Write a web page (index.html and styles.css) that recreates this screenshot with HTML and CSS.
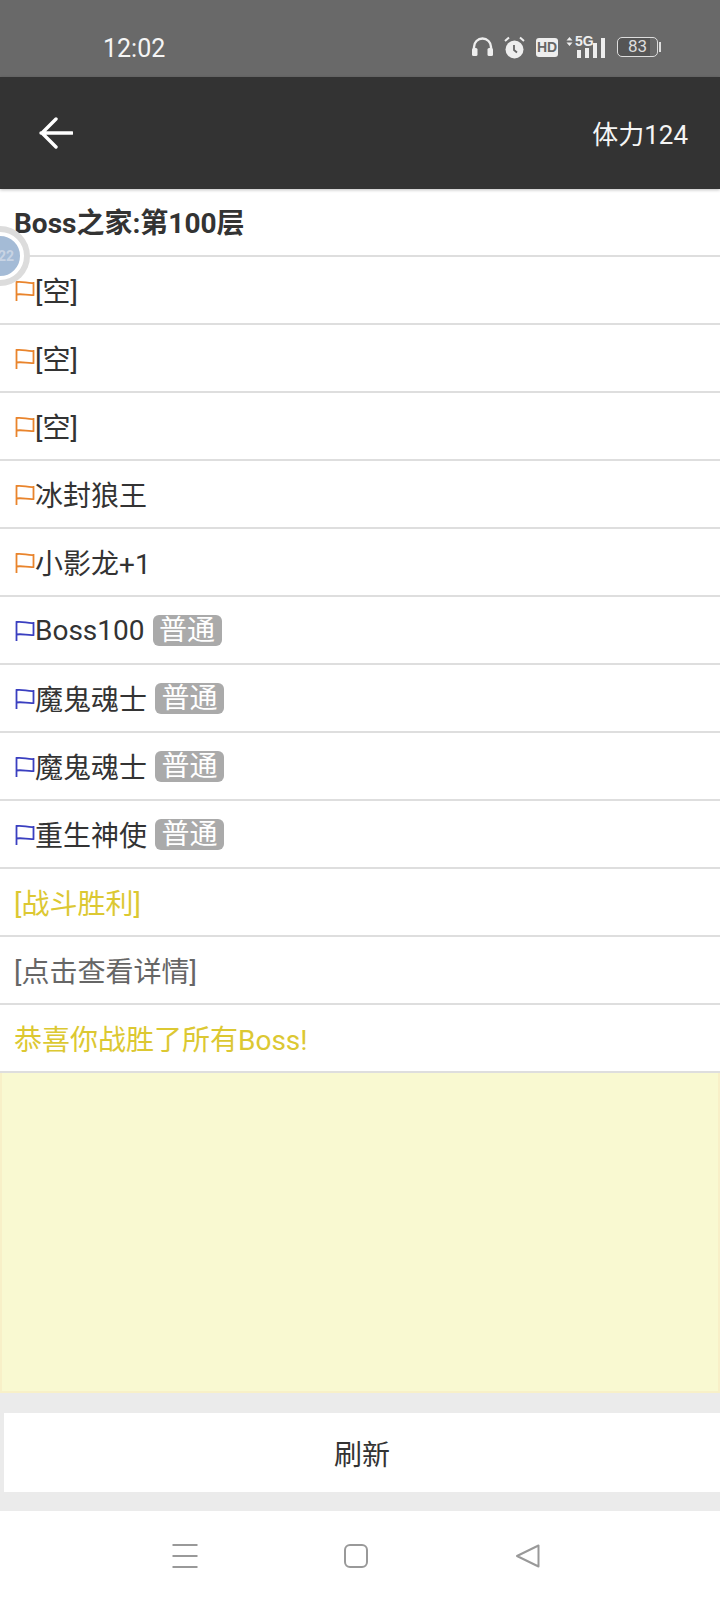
FILE: index.html
```html
<!DOCTYPE html>
<html lang="zh">
<head>
<meta charset="utf-8">
<title>Boss之家</title>
<link rel="stylesheet" href="styles.css">
</head>
<body>
<div class="page">
  <div class="status">
    <span class="time">12:02</span>
    <div class="status-icons">
      <svg class="ic-head" width="21" height="20" viewBox="0 0 21 20"><path d="M2 14V10a8.500 8.500 0 0 1 17 0v4" fill="none" stroke="#eee" stroke-width="2.400"/><rect x="0" y="11" width="5.500" height="8" rx="1.500" fill="#eee"/><rect x="15.500" y="11" width="5.500" height="8" rx="1.500" fill="#eee"/></svg>
      <svg class="ic-alarm" width="21" height="23" viewBox="0 0 21 23"><circle cx="10.500" cy="13.500" r="9" fill="#eee"/><path d="M10 9v5l3 2.500" fill="none" stroke="#666" stroke-width="1.800"/><path d="M1 5l4-3.500M20 5l-4-3.500" stroke="#eee" stroke-width="2" fill="none"/></svg>
      <span class="hd">HD</span>
      <div class="net">
        <svg class="net-arrows" width="7" height="9" viewBox="0 0 7 9"><path d="M3.500 0l3 3.500h-6zM3.500 9l3-3.500h-6z" fill="#eee"/></svg>
        <span class="five-g">5G</span>
        <div class="bars"><i class="b1"></i><i class="b2"></i><i class="b3"></i><i class="b4"></i></div>
      </div>
      <div class="battery"><span class="batt-body">83</span><span class="batt-tip"></span></div>
    </div>
  </div>
  <header class="appbar">
    <svg class="back" width="34" height="32" viewBox="0 0 34 32"><path d="M2 16h31M17 2 3 16l14 14" fill="none" stroke="#fff" stroke-width="3.400" stroke-linecap="round" stroke-linejoin="round"/></svg>
    <span class="stamina">体力124</span>
  </header>
  <main class="list">
    <div class="row title">Boss之家:第100层</div>
    <div class="row"><svg class="flag orange" viewBox="0 0 20 21"><path d="M1.500 21V2c6-1 11 1.500 17 1v12c-6 .5-11-1.500-17-.5"/></svg>[空]</div>
    <div class="row"><svg class="flag orange" viewBox="0 0 20 21"><path d="M1.500 21V2c6-1 11 1.500 17 1v12c-6 .5-11-1.500-17-.5"/></svg>[空]</div>
    <div class="row"><svg class="flag orange" viewBox="0 0 20 21"><path d="M1.500 21V2c6-1 11 1.500 17 1v12c-6 .5-11-1.500-17-.5"/></svg>[空]</div>
    <div class="row"><svg class="flag orange" viewBox="0 0 20 21"><path d="M1.500 21V2c6-1 11 1.500 17 1v12c-6 .5-11-1.500-17-.5"/></svg>冰封狼王</div>
    <div class="row"><svg class="flag orange" viewBox="0 0 20 21"><path d="M1.500 21V2c6-1 11 1.500 17 1v12c-6 .5-11-1.500-17-.5"/></svg>小影龙+1</div>
    <div class="row"><svg class="flag blue" viewBox="0 0 20 21"><path d="M1.500 21V2c6-1 11 1.500 17 1v12c-6 .5-11-1.500-17-.5"/></svg>Boss100<span class="tag">普通</span></div>
    <div class="row"><svg class="flag blue" viewBox="0 0 20 21"><path d="M1.500 21V2c6-1 11 1.500 17 1v12c-6 .5-11-1.500-17-.5"/></svg>魔鬼魂士<span class="tag">普通</span></div>
    <div class="row"><svg class="flag blue" viewBox="0 0 20 21"><path d="M1.500 21V2c6-1 11 1.500 17 1v12c-6 .5-11-1.500-17-.5"/></svg>魔鬼魂士<span class="tag">普通</span></div>
    <div class="row"><svg class="flag blue" viewBox="0 0 20 21"><path d="M1.500 21V2c6-1 11 1.500 17 1v12c-6 .5-11-1.500-17-.5"/></svg>重生神使<span class="tag">普通</span></div>
    <div class="row gold">[战斗胜利]</div>
    <div class="row grey">[点击查看详情]</div>
    <div class="row gold">恭喜你战胜了所有Boss!</div>
  </main>
  <div class="notice"></div>
  <div class="actions"><button class="refresh" type="button">刷新</button></div>
  <nav class="navbar">
    <svg width="26" height="26" viewBox="0 0 26 26"><path d="M0.500 2h25M0.500 13h25M0.500 24h25" stroke="#999" stroke-width="2.200" fill="none"/></svg>
    <svg width="26" height="26" viewBox="0 0 26 26"><rect x="2" y="2" width="22" height="22" rx="5" fill="none" stroke="#999" stroke-width="2"/></svg>
    <svg class="nav-back" width="26" height="26" viewBox="0 0 26 26"><path d="M23.500 2.500v21L2 13z" fill="none" stroke="#999" stroke-width="2" stroke-linejoin="round"/></svg>
  </nav>
  <div class="float-ball"><span class="ball-text">22</span></div>
</div>
</body>
</html>
```
FILE: styles.css
```css
* { box-sizing: border-box; }
html, body { margin: 0; padding: 0; }
body { width: 720px; height: 1600px; overflow: hidden; background: #ebebeb; font-family: Roboto, "Noto Sans CJK SC", sans-serif; color: #333; }
.page { position: relative; width: 720px; height: 1600px; display: flex; flex-direction: column; }

.status { height: 77px; flex: none; background: #696969; display: flex; align-items: center; padding: 19px 59px 0 103px; justify-content: space-between; }
.time { color: #f5f5f5; font-size: 25px; }
.status-icons { display: flex; align-items: center; margin-bottom: 2px; }
.ic-head { margin-right: 11px; }
.ic-alarm { margin-right: 11px; }
.hd { width: 22px; height: 19px; background: #eee; color: #666; border-radius: 3px; font: 700 14px/19px "Liberation Sans Narrow", "Liberation Sans", sans-serif; text-align: center; margin-right: 8px; }
.net { position: relative; width: 39px; height: 22px; margin-right: 12px; }
.net-arrows { position: absolute; left: 0; top: 1px; }
.five-g { position: absolute; left: 9px; top: -2px; color: #eee; font: 700 14px/14px "Liberation Sans Narrow", "Liberation Sans", sans-serif; }
.bars { position: absolute; left: 11px; bottom: 0; width: 28px; height: 20px; display: flex; align-items: flex-end; justify-content: space-between; }
.bars i { display: block; width: 4px; background: #eee; }
.b1 { height: 8px; } .b2 { height: 10px; } .b3 { height: 15px; } .b4 { height: 20px; }
.battery { display: flex; align-items: center; }
.batt-body { width: 41px; height: 20px; border: 1.500px solid #ddd; border-radius: 5px; background: linear-gradient(90deg, #555 0 83%, transparent 83%); color: #ddd; font-size: 17px; line-height: 17px; text-align: center; }
.batt-tip { width: 2px; height: 10px; background: #ddd; margin-left: 1px; }

.appbar { height: 112px; flex: none; background: #333; display: flex; align-items: center; justify-content: space-between; padding: 0 32px 0 39px; box-shadow: 0 1px 3px rgba(0,0,0,.25); position: relative; }
.stamina { color: #f5f5f5; font-size: 26px; margin-bottom: 2px; }

.list { background: #fff; flex: none; }
.row { height: 68px; padding: 0 14px; display: flex; align-items: center; border-bottom: 2px solid #dedede; font-size: 28px; color: #333; white-space: pre; }
.row.title { font-weight: 700; padding-bottom: 2px; }
.row.gold { color: #dcc832; }
.row.grey { color: #666; }
.flag { width: 20px; height: 21px; margin-left: 1px; fill: none; stroke-width: 1.800; flex: none; }
.orange { stroke: #e9842c; }
.blue { stroke: #3a3fc0; }
.tag { margin-left: 8px; background: #aaa; color: #fff; border-radius: 6px; height: 31px; width: 69px; font-size: 28px; line-height: 31px; text-align: center; }

.notice { height: 320px; flex: none; background: #f9f9d1; border: 2px solid #f8f0c8; border-top: 0; }
.actions { flex: 1; padding: 20px 0 19px 4px; display: flex; }
.refresh { flex: 1; border: 0; background: #fff; color: #333; font: 28px Roboto, "Noto Sans CJK SC", sans-serif; }
.navbar { height: 89px; flex: none; background: #fff; display: flex; align-items: center; justify-content: center; gap: 145px; padding-right: 8px; }
.nav-back { margin-left: 1px; }

.float-ball { position: absolute; left: -24px; top: 232px; width: 48px; height: 48px; border-radius: 50%; background: #a4bbd6; border: 4px solid #fff; box-shadow: 0 0 0 6px #dcdcdc; overflow: hidden; display: flex; align-items: center; justify-content: flex-end; }
.ball-text { color: #c8d4e4; font-size: 14px; font-weight: 700; padding-right: 6px; }
```
